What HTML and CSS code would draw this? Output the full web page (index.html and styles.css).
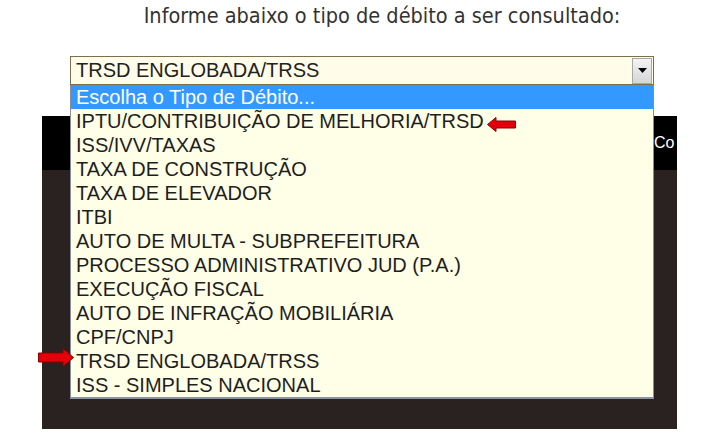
FILE: index.html
```html
<!DOCTYPE html>
<html lang="pt-BR">
<head>
<meta charset="UTF-8" />
<meta name="viewport" content="width=device-width, initial-scale=1" />
<title>Consulta de Débitos</title>
<link rel="stylesheet" href="styles.css">
</head>
<body>
<p class="intro">Informe abaixo o tipo de débito a ser consultado:</p>

<div class="picker">
  <div class="select-box">
    <span class="select-value">TRSD ENGLOBADA/TRSS</span>
    <span class="drop-btn">
      <svg width="9" height="5" viewBox="0 0 9 5"><polygon points="0,0 9,0 4.5,5" fill="#000"/></svg>
    </span>
  </div>
  <ul class="options">
    <li class="active">Escolha o Tipo de Débito...</li>
    <li>IPTU/CONTRIBUIÇÃO DE MELHORIA/TRSD</li>
    <li>ISS/IVV/TAXAS</li>
    <li>TAXA DE CONSTRUÇÃO</li>
    <li>TAXA DE ELEVADOR</li>
    <li>ITBI</li>
    <li>AUTO DE MULTA - SUBPREFEITURA</li>
    <li>PROCESSO ADMINISTRATIVO JUD (P.A.)</li>
    <li>EXECUÇÃO FISCAL</li>
    <li>AUTO DE INFRAÇÃO MOBILIÁRIA</li>
    <li>CPF/CNPJ</li>
    <li>TRSD ENGLOBADA/TRSS</li>
    <li>ISS - SIMPLES NACIONAL</li>
  </ul>
  <!-- red markers drawn over the list -->
  <svg class="marker marker-left" width="29" height="15" viewBox="0 0 29 15">
    <polygon points="0.5,7.5 9,0.5 9,4 28.5,4 28.5,11 9,11 9,14.5" fill="#e3000b" stroke="#8a0000" stroke-width="1"/>
  </svg>
  <svg class="marker marker-right" width="36" height="19" viewBox="0 0 36 19">
    <polygon points="35.5,9.5 25,0.5 25,5 0.5,5 0.5,14 25,14 25,18.5" fill="#e3000b" stroke="#8a0000" stroke-width="1"/>
  </svg>
</div>

<div class="panel">
  <div class="panel-head"><span>Co</span></div>
</div>
</body>
</html>
```

FILE: styles.css
```css
body {
  margin: 0;
  background: #fff;
  font-family: 'Liberation Sans', Arial, sans-serif;
  color: #222;
}
.intro {
  margin: 0;
  padding: 1px 0 0 46px;
  text-align: center;
  font-family: 'DejaVu Sans Condensed', 'DejaVu Sans', sans-serif;
  font-stretch: condensed;
  font-size: 21.5px;
  line-height: 30px;
  color: #333;
}
.picker {
  position: relative;
  margin: 25px 0 0 70px;
  width: 584px;
}
.select-box {
  box-sizing: border-box;
  height: 29px;
  display: flex;
  align-items: center;
  justify-content: space-between;
  padding: 0 1px 0 5px;
  border: 1px solid #7d6e4c;
  background: #fffde9;
  font-size: 20px;
}
.drop-btn {
  box-sizing: border-box;
  width: 20px;
  height: 26px;
  display: flex;
  align-items: center;
  justify-content: center;
  border: 1px solid #a8a8a8;
  background: linear-gradient(#f4f4f4, #d6d6d6);
}
.options {
  position: absolute;
  top: 29px;
  left: 0;
  right: 0;
  margin: 0;
  padding: 0;
  list-style: none;
  background: #fffee6;
  border-left: 1px solid #8a8f96;
  border-right: 1px solid #8a8f96;
  border-bottom: 2px solid #8a949e;
  z-index: 2;
}
.options li {
  height: 24px;
  line-height: 24px;
  padding-left: 5px;
  font-size: 20px;
  color: #1e1e1e;
  white-space: nowrap;
}
.options li.active {
  background: #3399ff;
  color: #fff;
}
.marker {
  position: absolute;
  z-index: 3;
}
.marker-left {
  left: 417px;
  top: 61px;
}
.marker-right {
  left: -32px;
  top: 292px;
}
.panel {
  margin: 31px 0 0 42px;
  width: 635px;
  height: 313px;
  background: #2a2121;
  overflow: hidden;
}
.panel-head {
  height: 54px;
  background: #000;
  color: #fff;
  font-size: 16px;
  line-height: 54px;
  padding-left: 612px;
  white-space: nowrap;
}
```
